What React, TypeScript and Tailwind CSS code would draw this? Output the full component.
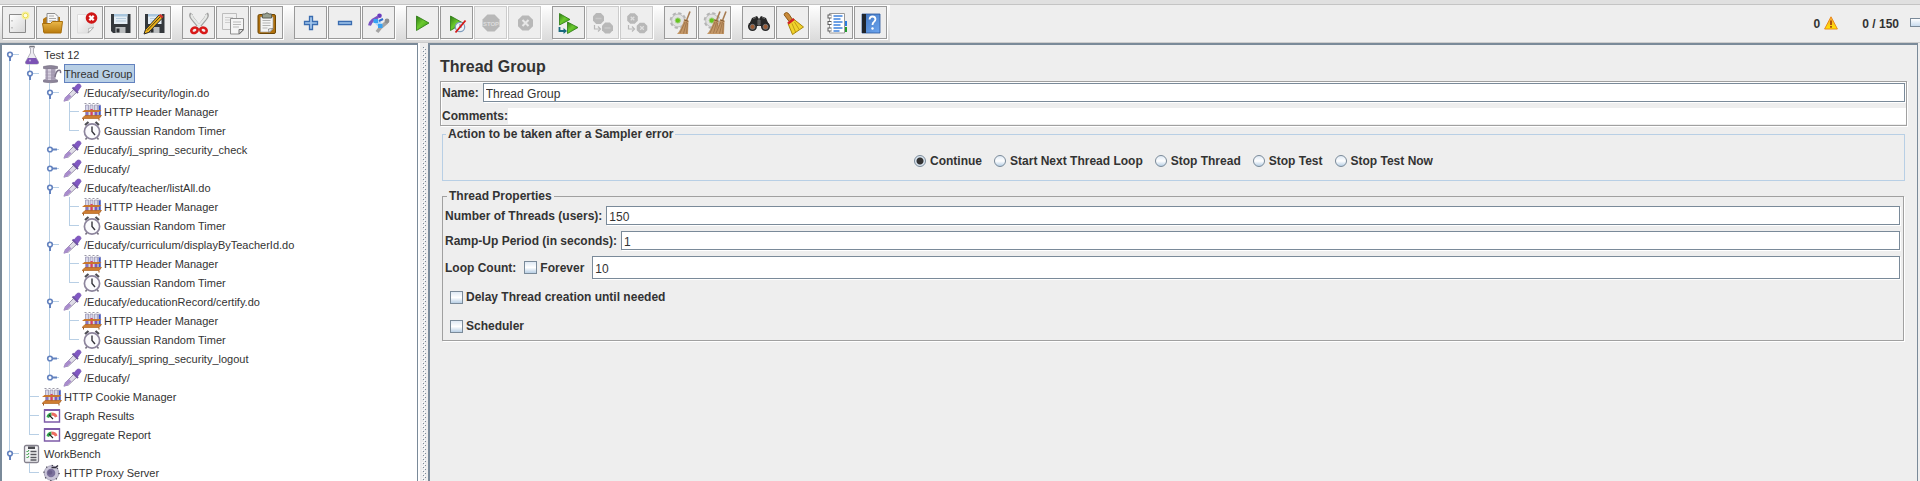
import React from "react";

type IconProps = { children: React.ReactNode; size?: string };

function Glyph({ children, size = "h-6 w-6" }: IconProps) {
  return (
    <svg viewBox="0 0 24 24" className={`${size} shrink-0`} aria-hidden="true">
      {children}
    </svg>
  );
}

const Defs = () => (
  <svg width="0" height="0" className="absolute" aria-hidden="true">
    <defs>
      <linearGradient id="green" x1="0" y1="0" x2="1" y2="1">
        <stop offset="0" stopColor="#2b7a12" />
        <stop offset="0.45" stopColor="#6cc92f" />
        <stop offset="1" stopColor="#2f9410" />
      </linearGradient>
      <linearGradient id="folder" x1="0" y1="0" x2="0" y2="1">
        <stop offset="0" stopColor="#eab84a" />
        <stop offset="1" stopColor="#b97a0c" />
      </linearGradient>
      <linearGradient id="paper" x1="0" y1="0" x2="1" y2="1">
        <stop offset="0" stopColor="#ffffff" />
        <stop offset="1" stopColor="#d6d6d6" />
      </linearGradient>
      <linearGradient id="book" x1="0" y1="0" x2="1" y2="1">
        <stop offset="0" stopColor="#3f74bf" />
        <stop offset="1" stopColor="#6da6f0" />
      </linearGradient>
      <linearGradient id="warn" x1="0" y1="0" x2="0" y2="1">
        <stop offset="0" stopColor="#f9a13a" />
        <stop offset="1" stopColor="#ffe600" />
      </linearGradient>
      <pattern id="grip" width="4" height="4" patternUnits="userSpaceOnUse">
        <path d="M1 0h1v1H1zM3 2h1v1H3z" fill="#7a8a99" />
        <path d="M2 1h1v1H2zM0 3h1v1H0z" fill="#ffffff" />
      </pattern>
    </defs>
  </svg>
);

const Floppy = () => (
  <>
    <path d="M2 3h19.500v19H4l-2-2z" fill="#34383c" />
    <path d="M5 3h13.500v10H5z" fill="#e4edf4" />
    <path d="M5 3h13.500v2.500H5z" fill="#a9c6dd" />
    <path d="M7 7.500h10M7 10h10" stroke="#b5cbdc" strokeWidth="1" />
    <path d="M6.500 16h10v6h-10z" fill="#b9bcbe" />
    <path d="M7.500 17.500h3v4h-3z" fill="#2b2e31" />
  </>
);

const Stop = ({ cx, cy, r }: { cx: number; cy: number; r: number }) => (
  <path
    d={`M${cx - r * 0.42} ${cy - r}H${cx + r * 0.42}L${cx + r} ${cy - r * 0.42}V${cy + r * 0.42}L${cx + r * 0.42} ${cy + r}H${cx - r * 0.42}L${cx - r} ${cy + r * 0.42}V${cy - r * 0.42}z`}
    fill="#b8b8b8"
  />
);

const Broom = ({ dx = 0 }: { dx?: number }) => (
  <g transform={`translate(${dx} 0)`}>
    <path d="M21 0.500l-3.500 9" stroke="#a67c52" strokeWidth="1.600" />
    <path d="M15.500 8l4 1.500-.5 13.500h-11q4-4 7.500-15z" fill="#c39767" />
    <path d="M16 11l-5 11M17.500 11l-3 11.500M18.500 12l-1 10.500" stroke="#8b6239" strokeWidth="0.600" />
    <path d="M15.300 9l4 1.300" stroke="#7d5630" strokeWidth="1" />
  </g>
);

const Gear = () => (
  <>
    <circle cx="9" cy="9.500" r="7.200" fill="#dedede" stroke="#b4b4b4" strokeWidth="2.200" strokeDasharray="3.300 2.350" />
    <circle cx="9" cy="9.500" r="6.300" fill="#e2e2e2" stroke="#c2c2c2" />
    <circle cx="8.800" cy="9.500" r="2.600" fill="#66c41f" stroke="#a4cf86" />
  </>
);

const toolIcons: Record<string, React.ReactNode> = {
  New: (
    <>
      <path d="M2.500 3.500h16v18h-16z" fill="url(#paper)" stroke="#8a8a8a" />
      <path d="M5 9v1.500M5 16v1.500" stroke="#999" strokeWidth="1" />
      <circle cx="18.500" cy="4.500" r="4" fill="#f6ef9c" />
      <circle cx="18.500" cy="4.500" r="2.300" fill="#fffde0" stroke="#e9dd52" />
    </>
  ),
  Open: (
    <>
      <path d="M2 8l3-2h14v15H2z" fill="#b8780f" />
      <path d="M6 2.500h8l3 3V15H6z" fill="#f7f7f7" stroke="#8c8c8c" />
      <path d="M8 5h5M8 7.500h7M8 10h7" stroke="#a8a8a8" />
      <path d="M1.500 12.500h8l2-2h10l-1.500 11.500h-17z" fill="url(#folder)" stroke="#a86f0c" />
    </>
  ),
  Close: (
    <>
      <path d="M2.500 3.500h16V17l-4.500 5H2.500z" fill="url(#paper)" stroke="#dcdcdc" />
      <path d="M18.500 16.500l-5.500 5.500q1.500-3 .5-4.500z" fill="#fff" stroke="#aaa" strokeWidth="0.800" />
      <circle cx="16.500" cy="7" r="5.800" fill="#cf1616" />
      <path d="M14.300 4.800l4.400 4.400M18.700 4.800l-4.400 4.400" stroke="#fff" strokeWidth="2.200" />
    </>
  ),
  Save: <Floppy />,
  "Save as": (
    <>
      <Floppy />
      <path d="M16 4l3.500 3L5.500 21.500 1 23l1.500-4.500z" fill="#f0b51c" stroke="#2a2a2a" strokeWidth="1" />
      <path d="M15.500 4.500l2-1.500 3 2.500-1.500 2z" fill="#d0352b" />
      <path d="M4 19.500L17 6" stroke="#4a3a10" strokeWidth="1" />
    </>
  ),
  Cut: (
    <>
      <path d="M4.500 2.500q-1.500 2 1 5l8 10M19.500 2.500q1.500 2-1 5l-8 10" stroke="#a0a0a0" strokeWidth="3.600" fill="none" />
      <path d="M5 3.500q-1 1.500 1 4l7.500 9M19 3.500q1 1.500-1 4l-7.500 9" stroke="#e6e8e6" strokeWidth="2.200" fill="none" />
      <ellipse cx="7.500" cy="19.300" rx="3.300" ry="2.600" fill="none" stroke="#d81818" strokeWidth="2.600" transform="rotate(-25 7.500 19.300)" />
      <ellipse cx="16.500" cy="19.300" rx="3.300" ry="2.600" fill="none" stroke="#d81818" strokeWidth="2.600" transform="rotate(25 16.500 19.300)" />
    </>
  ),
  Copy: (
    <>
      <path d="M1.500 2.500h14v16h-14z" fill="#f0f0f0" stroke="#bdbdbd" />
      <path d="M4 6.500h8M4 9h8M4 11.500h6" stroke="#cdcdcd" />
      <path d="M9.500 7.500h13V19l-4 4h-9z" fill="#f5f5f5" stroke="#8f8f8f" />
      <path d="M12 11h8M12 13.500h8M12 16h6" stroke="#b9b9b9" />
      <path d="M22.500 18.500l-4.500 4.500v-4.500z" fill="#ddd" stroke="#777" />
    </>
  ),
  Paste: (
    <>
      <rect x="3" y="3.500" width="17.500" height="19" rx="1.500" fill="#b0710e" stroke="#6e4705" />
      <path d="M5.500 6h12.500v12l-3 3H5.500z" fill="#f4f4f4" stroke="#9f9f9f" strokeWidth="0.700" />
      <path d="M7.500 9.500h8M7.500 12h8M7.500 14.500h8M7.500 17h5" stroke="#b3b3b3" />
      <path d="M18 17.500l-4 4-.5-3.500z" fill="#fff" stroke="#777" strokeWidth="0.800" />
      <path d="M7.500 3h2.500q2-2.500 4 0h2.500v4h-9z" fill="#98a090" stroke="#5c6156" />
    </>
  ),
  "Expand all": <path d="M10.500 5.500h3v5h5v3h-5v5h-3v-5h-5v-3h5z" fill="#a5c8ee" stroke="#3a6cb0" strokeWidth="1.300" />,
  "Collapse all": <path d="M5.500 10.500h13v3h-13z" fill="#a5c8ee" stroke="#3a6cb0" strokeWidth="1.300" />,
  Toggle: (
    <>
      <path d="M2.500 14.500q.5-3 3.500-5.500l5-3" fill="none" stroke="#7b55c4" strokeWidth="3" />
      <circle cx="12.500" cy="4.800" r="2.300" fill="#6a3bbd" />
      <path d="M10 21l4-5 6-5" fill="none" stroke="#a4a4a4" strokeWidth="3.600" />
      <circle cx="20" cy="10" r="2.400" fill="#8f8f8f" />
      <path d="M9 10l5 5" stroke="#a9d6fa" strokeWidth="5" />
      <path d="M6.500 8h4.500v4H6.500zM11 13h4.500v4H11z" fill="#38a3f4" />
      <path d="M12 10l4-2" stroke="#2f6fd0" strokeWidth="2" />
    </>
  ),
  Start: <path d="M5.500 5L18 12 5.500 19.500z" fill="url(#green)" stroke="#28780f" strokeWidth="0.800" />,
  "Start no pauses": (
    <>
      <path d="M5.500 5L18 12 5.500 19.500z" fill="url(#green)" stroke="#28780f" strokeWidth="0.800" />
      <circle cx="15" cy="16" r="4.700" fill="#eef3f8" stroke="#7f9dbd" strokeWidth="1.200" />
      <path d="M15 16v-3M15 16h2" stroke="#6a8ab0" />
      <path d="M20.500 9.500l-10 12" stroke="#d51717" strokeWidth="1.800" />
    </>
  ),
  Stop: (
    <>
      <Stop cx={12} cy={12} r={8.500} />
      <text x="12" y="14.500" textAnchor="middle" fontSize="6" fontWeight="700" fill="#dcdcdc" fontFamily="Liberation Sans">STOP</text>
    </>
  ),
  Shutdown: (
    <>
      <Stop cx={12.500} cy={12} r={7.500} />
      <path d="M9.500 9l6 6M15.500 9l-6 6" stroke="#e8e8e8" strokeWidth="2" />
    </>
  ),
  "Remote start all": (
    <>
      <path d="M2.500 2.500L13 8.500 2.500 14z" fill="url(#green)" stroke="#28780f" strokeWidth="0.800" />
      <path d="M10.500 11L21 16.500l-10.500 6z" fill="url(#green)" stroke="#28780f" strokeWidth="0.800" />
      <path d="M2.500 16v4h4.500" fill="none" stroke="#17697d" strokeWidth="1.800" />
      <path d="M6.500 17l3.500 3-3.500 3z" fill="#17697d" />
    </>
  ),
  "Remote stop all": (
    <>
      <Stop cx={7.500} cy={7.500} r={5.500} />
      <Stop cx={16.500} cy={17} r={5.500} />
      <path d="M4.500 7.500h6M13.500 17h6" stroke="#c8c8c8" strokeWidth="1.500" />
      <path d="M3.500 14v4h5M7 15.500l2.500 2.500L7 20.500" fill="none" stroke="#b8b8b8" strokeWidth="1.200" />
    </>
  ),
  "Remote shutdown all": (
    <>
      <Stop cx={7.500} cy={7.500} r={5.300} />
      <Stop cx={17} cy={17} r={5.300} />
      <path d="M5.700 5.700l3.600 3.600M9.300 5.700l-3.600 3.600M15.200 15.200l3.600 3.600M18.800 15.200l-3.600 3.600" stroke="#dedede" strokeWidth="1.300" />
      <path d="M3.500 14v4h5M7 15.500l2.500 2.500L7 20.500" fill="none" stroke="#b8b8b8" strokeWidth="1.200" />
    </>
  ),
  Clear: (
    <>
      <Gear />
      <Broom />
    </>
  ),
  "Clear all": (
    <>
      <Gear />
      <Broom dx={-4} />
      <Broom dx={2} />
    </>
  ),
  Search: (
    <>
      <path d="M5 7l5-2 2 3 2-3 5 2 3.500 8H1.500z" fill="#262626" />
      <path d="M6 7.500l3-1M15 6.500l3 1M11 9h2v5h-2z" stroke="#6a6a6a" fill="#505050" />
      <circle cx="5.500" cy="15.500" r="4.500" fill="#262626" />
      <circle cx="18.500" cy="15.500" r="4.500" fill="#262626" />
      <circle cx="5.500" cy="15.800" r="2.500" fill="#9c5a33" stroke="#777" />
      <circle cx="18.500" cy="15.800" r="2.500" fill="#9c5a33" stroke="#777" />
    </>
  ),
  "Reset search": (
    <>
      <path d="M3.500 2.500q2-2 4 0l4 6-3 2.500-4.500-6q-1.500-1 -.5-2.500z" fill="#c98a3a" stroke="#8d5a18" />
      <path d="M12.500 8l10 8-11 7.500-4.500-11z" fill="#f0d22c" stroke="#a8850b" />
      <path d="M11 12.500l3.500 8.500M13.500 11l5 8" stroke="#bf9d14" />
      <path d="M7 12.500l6-4.500" stroke="#d32424" strokeWidth="2.500" />
    </>
  ),
  "Function helper": (
    <>
      <path d="M4.500 2.500h15v19.500h-15z" fill="#fff" stroke="#9a9a9a" />
      <path d="M20 10h2v5h-2z" fill="#2b7de0" />
      <path d="M20 16h2v5h-2z" fill="#229c2c" />
      <path d="M8.500 5h9M8.500 8h7M8.500 11h9M8.500 14h7M8.500 17h9M8.500 20h6" stroke="#3f83dd" strokeWidth="1.300" />
      <path d="M2.500 5.500h4M2.500 12h4M2.500 18.500h4" stroke="#5a5a5a" strokeWidth="4" />
      <path d="M3.500 5.500h3M3.500 12h3M3.500 18.500h3" stroke="#fff" strokeWidth="2.200" />
    </>
  ),
  Help: (
    <>
      <path d="M3 3h18v19H3z" fill="url(#book)" stroke="#29559c" strokeWidth="0.800" />
      <path d="M3 3h4v19H3z" fill="#20252c" />
      <path d="M10.500 8.500q.3-3 3-3t3 2.600q0 1.600-1.600 2.800-1.400 1-1.400 3" fill="none" stroke="#fff" strokeWidth="1.800" />
      <circle cx="13.500" cy="17.500" r="1.200" fill="#fff" />
    </>
  ),
};

const toolGroups: string[][] = [
  ["New", "Open", "Close", "Save", "Save as"],
  ["Cut", "Copy", "Paste"],
  ["Expand all", "Collapse all", "Toggle"],
  ["Start", "Start no pauses", "Stop", "Shutdown"],
  ["Remote start all", "Remote stop all", "Remote shutdown all"],
  ["Clear", "Clear all"],
  ["Search", "Reset search"],
  ["Function helper", "Help"],
];
const disabledTools = ["Stop", "Shutdown", "Remote stop all", "Remote shutdown all"];

function Toolbar() {
  return (
    <header>
      <div className="h-1 bg-[#e0e0e0]" />
      <div className="flex h-[38px] items-stretch border-t border-[#c4c4c4] bg-[#eeeeee]">
        <div
          role="toolbar"
          aria-label="Main"
          className="flex gap-[11px] border-b border-[#dadada] bg-linear-to-b from-white to-[#dadada] pt-px pr-[3px] pl-0.5"
        >
          {toolGroups.map((group) => (
            <div key={group[0]} className="flex gap-px">
              {group.map((name) => {
                const off = disabledTools.includes(name);
                return (
                  <button
                    key={name}
                    type="button"
                    aria-label={name}
                    disabled={off}
                    className={`flex h-[33px] w-[33px] items-center justify-center border bg-[#eeeeee] shadow-[1px_1px_0_#fff] ${
                      off ? "border-[#cccccc]" : "border-[#999999]"
                    }`}
                  >
                    <Glyph>{toolIcons[name]}</Glyph>
                  </button>
                );
              })}
            </div>
          ))}
        </div>
        <div className="ml-auto flex items-center pt-px text-xs font-bold">
          <span>0</span>
          <svg viewBox="0 0 14 14" className="mr-6 mb-0.5 ml-1 h-3.5 w-3.5" aria-label="Warnings">
            <path d="M7 .8L13.400 13H.6z" fill="url(#warn)" stroke="#e88a1c" strokeLinejoin="round" />
            <path d="M6.100 4.500h1.800v4.500H6.100zM6.100 10h1.800v1.700H6.100z" fill="#a8480c" />
          </svg>
          <span>0 / 150</span>
          <span className="mb-1 ml-[11px] h-[9px] w-2.5 border border-r-0 border-[#7a8a99] bg-linear-to-b from-white to-[#c8dbee]" />
        </div>
      </div>
      <div className="h-px bg-[#cccccc]" />
    </header>
  );
}

type NodeKind = "plan" | "group" | "sampler" | "config" | "timer" | "listener" | "bench" | "proxy";

const nodeIcons: Record<NodeKind, React.ReactNode> = {
  plan: (
    <>
      <path d="M7.500 1.500h5v1.500h-1v5l5 9q.5 2-1.500 2H5q-2 0-1.500-2l5-9V3h-1z" fill="#ecebf1" stroke="#b3b3bb" />
      <path d="M6 13h8l2.500 4q.5 2-1.500 2H5q-2 0-1.500-2z" fill="#7c53b5" />
      <path d="M7.500 1.500h5" stroke="#77777f" strokeWidth="1.500" />
      <circle cx="8" cy="15.500" r="1" fill="#c3aee4" />
    </>
  ),
  group: (
    <>
      <path d="M1.500 2.500q7-2 14 0v2q-7 1.500-14 0zM1.500 16q7-2 14 0v2q-7 1.500-14 0z" fill="#8d8499" stroke="#7a7286" strokeWidth="0.700" />
      <path d="M3.500 5h10v11h-10z" fill="#a99fb6" />
      <path d="M6 5h3v11H6z" fill="#d4cddd" />
      <path d="M3.500 8h10M3.500 11h10M3.500 14h10" stroke="#9a90a8" strokeWidth="0.600" />
      <path d="M13 13q1-6.500 4-6.800 2-.2 1.500 3" fill="none" stroke="#7b7288" strokeWidth="1.500" />
    </>
  ),
  sampler: (
    <>
      <path d="M2 18l1.500-3.500 9-9 3 3-9 8.500z" fill="#e0dde8" stroke="#9a94aa" strokeWidth="1" />
      <path d="M1.500 18.800l1.800-4.500 3.700-3.300 2.500 2.500-4 3.700z" fill="#a98ccd" />
      <path d="M10.500 4.500l5.500 5.500" stroke="#6f55a0" strokeWidth="2" />
      <path d="M12 5l3-3.500q3.500-1.500 4 2l-3.500 5z" fill="#8157c4" stroke="#7450b0" strokeWidth="0.800" />
    </>
  ),
  config: (
    <>
      <path d="M3.500 3h3v12h-3zM8 3h3v12H8zM12.500 3h3v12h-3zM16.500 3h2v12h-2z" fill="#d8d6ea" stroke="#8f8cab" strokeWidth="0.700" />
      <path d="M4 8h2v6H4z" fill="#8a6fc0" />
      <path d="M8.500 7h2.200v7H8.500z" fill="#da3e66" />
      <path d="M13 8h2v6h-2z" fill="#8059c0" />
      <path d="M17 3.500h1.500V13H17z" fill="#3b57d6" />
      <path d="M2.500 1.500h16" stroke="#9a98a6" strokeDasharray="2 2" />
      <path d="M0 10l2.500-2h17l-2.500 2z" fill="#c9762b" />
      <path d="M0 16.500l3-3h16.500l-2.500 3z" fill="#cf7d30" stroke="#b0661f" strokeWidth="0.700" />
      <path d="M1.500 16.500v2M17 16.500v2" stroke="#9c5516" />
    </>
  ),
  timer: (
    <>
      <path d="M3 4L6.500 1M17 4L13.500 1" stroke="#4f4f56" strokeWidth="2.200" />
      <path d="M5 16.500l-1.500 2M15 16.500l1.500 2" stroke="#77737f" strokeWidth="1.500" />
      <circle cx="10" cy="10.500" r="7.600" fill="#fbfbfd" stroke="#8d859d" strokeWidth="1.700" />
      <path d="M10 5.500v5l3 3.500" fill="none" stroke="#35353b" strokeWidth="1.400" />
    </>
  ),
  listener: (
    <>
      <path d="M2.500 4h15v12h-15z" fill="#fff" stroke="#7d5ba8" strokeWidth="1.400" />
      <path d="M2 4h16" stroke="#7d5ba8" strokeWidth="2" />
      <path d="M4.500 11q.5-4 5-4.500v3.500q-2 0-2.500 2z" fill="#31a34b" />
      <path d="M9.500 6.500q5 0 6 4l-2.500 1q-.5-2-3.500-2z" fill="#ec6d62" />
      <path d="M7 9l4 4" stroke="#222" strokeWidth="1.100" />
    </>
  ),
  bench: (
    <>
      <rect x="2.500" y="1.500" width="14" height="17" rx="1.500" fill="#f3f3f5" stroke="#84818d" strokeWidth="1.300" />
      <path d="M6 2.500h7v2.500H6z" fill="#4a4a50" />
      <path d="M8.500 7.500h6M8.500 10.500h6M8.500 13.500h6M8.500 16h6" stroke="#57575e" strokeWidth="1.500" />
      <path d="M4.500 7l1 1 1.500-2M4.500 10l1 1 1.500-2M4.500 13l1 1 1.500-2" fill="none" stroke="#39a045" />
    </>
  ),
  proxy: (
    <>
      <circle cx="9.500" cy="10" r="7.300" fill="#c9c5d8" stroke="#aaa6bc" />
      <circle cx="9.500" cy="10" r="7.600" fill="none" stroke="#3d3a4a" strokeWidth="1.200" strokeDasharray="1.200 4.770" />
      <circle cx="9" cy="10" r="4.300" fill="#7b719c" />
      <circle cx="8" cy="9.500" r="2.200" fill="#6a5f8c" />
      <path d="M9.500 4.500h4l2.500-2" fill="none" stroke="#2f2c3a" strokeWidth="1.500" />
    </>
  ),
};

type TreeNode = { label: string; kind: NodeKind; closed?: boolean; selected?: boolean; children?: TreeNode[] };

const headerAndTimer: TreeNode[] = [
  { label: "HTTP Header Manager", kind: "config" },
  { label: "Gaussian Random Timer", kind: "timer" },
];

const tree: TreeNode[] = [
  {
    label: "Test 12",
    kind: "plan",
    children: [
      {
        label: "Thread Group",
        kind: "group",
        selected: true,
        children: [
          { label: "/Educafy/security/login.do", kind: "sampler", children: headerAndTimer },
          { label: "/Educafy/j_spring_security_check", kind: "sampler", closed: true },
          { label: "/Educafy/", kind: "sampler", closed: true },
          { label: "/Educafy/teacher/listAll.do", kind: "sampler", children: headerAndTimer },
          { label: "/Educafy/curriculum/displayByTeacherId.do", kind: "sampler", children: headerAndTimer },
          { label: "/Educafy/educationRecord/certify.do", kind: "sampler", children: headerAndTimer },
          { label: "/Educafy/j_spring_security_logout", kind: "sampler", closed: true },
          { label: "/Educafy/", kind: "sampler", closed: true },
        ],
      },
      { label: "HTTP Cookie Manager", kind: "config" },
      { label: "Graph Results", kind: "listener" },
      { label: "Aggregate Report", kind: "listener" },
    ],
  },
  { label: "WorkBench", kind: "bench", children: [{ label: "HTTP Proxy Server", kind: "proxy" }] },
];

function Guide({ line }: { line: boolean }) {
  return (
    <svg viewBox="0 0 20 19" className="h-[19px] w-5 shrink-0" aria-hidden="true">
      {line && <path d="M7.500 0v19" stroke="#b8cfe5" />}
    </svg>
  );
}

function Joint({ node, last, root }: { node: TreeNode; last: boolean; root: boolean }) {
  const bottom = last ? 10 : 19;
  const top = root && !last ? 9 : 0;
  return (
    <svg viewBox="0 0 20 19" className="h-[19px] w-5 shrink-0" aria-hidden="true">
      <path d={`M7.500 ${top}V${bottom}M7 9.500H17`} stroke="#b8cfe5" fill="none" />
      {node.children && <path d="M8 10v6" stroke="#6382bf" strokeWidth="2" />}
      {node.closed && <path d="M10 9.500h5" stroke="#6382bf" strokeWidth="2" />}
      {(node.children || node.closed) && <circle cx="8" cy="9.500" r="2.300" fill="#fff" stroke="#6382bf" strokeWidth="1.600" />}
    </svg>
  );
}

function Branch({ nodes, trail }: { nodes: TreeNode[]; trail: boolean[] }) {
  return (
    <ul role={trail.length ? "group" : "tree"}>
      {nodes.map((node, i) => {
        const last = i === nodes.length - 1;
        return (
          <li key={i} role="treeitem" aria-selected={!!node.selected}>
            <div className="flex h-[19px] items-center">
              {trail.map((line, k) => (
                <Guide key={k} line={line} />
              ))}
              <Joint node={node} last={last} root={trail.length === 0} />
              <svg viewBox="0 0 20 20" className="mr-0.5 h-5 w-5 shrink-0" aria-hidden="true">
                {nodeIcons[node.kind]}
              </svg>
              <span
                className={`flex h-[19px] items-center border-y border-r pt-0.5 pr-0.5 whitespace-nowrap ${
                  node.selected ? "border-[#6382bf] bg-[#b8cfe5] shadow-[inset_1px_0_0_#6382bf]" : "border-transparent"
                }`}
              >
                {node.label}
              </span>
            </div>
            {node.children && <Branch nodes={node.children} trail={[...trail, !last]} />}
          </li>
        );
      })}
    </ul>
  );
}

const fieldClass =
  "min-w-0 flex-1 border border-[#7a8a99] bg-white px-0.5 pt-0.5 text-xs font-normal text-[#333333] shadow-[1px_1px_0_#fff] outline-none";
const boxClass =
  "h-[13px] w-[13px] shrink-0 appearance-none border border-[#7a8a99] bg-linear-to-b from-[#dfe9f4] via-white to-[#b8cfe5]";

function Check({ label }: { label: string }) {
  return (
    <label className="flex items-center gap-[3px]">
      <input type="checkbox" className={boxClass} />
      {label}
    </label>
  );
}

function Editor() {
  return (
    <main className="min-w-0 flex-1 border-2 border-r border-b-0 border-[#7a8a99] bg-[#eeeeee] px-2.5 text-xs font-bold">
      <h1 className="pt-3 pb-1 text-base leading-5">Thread Group</h1>
      <section className="border border-[#a0a0a0] pb-px shadow-[1px_1px_0_#fff,inset_1px_1px_0_#fff]">
        <div className="flex items-center gap-1 pt-px pr-px pl-px">
          <label htmlFor="name" className="pt-px">Name:</label>
          <input id="name" defaultValue="Thread Group" className={`${fieldClass} h-[19px]`} />
        </div>
        <div className="mt-[6px] flex h-4 items-center pl-px">
          <label htmlFor="comments">Comments:</label>
          <input id="comments" className="h-4 min-w-0 flex-1 bg-white px-0.5 font-normal outline-none" />
        </div>
      </section>

      <fieldset className="mx-0.5 mt-px h-[54px] border border-[#b8cfe5]">
        <legend className="ml-[3px] px-0.5 leading-[14px]">Action to be taken after a Sampler error</legend>
        <div className="flex h-full items-center justify-center gap-3">
          {["Continue", "Start Next Thread Loop", "Stop Thread", "Stop Test", "Stop Test Now"].map((t) => (
            <label key={t} className="flex items-center gap-1">
              <input
                type="radio"
                name="action"
                defaultChecked={t === "Continue"}
                className="h-3 w-3 shrink-0 appearance-none rounded-full border border-[#7a8a99] bg-linear-to-b from-[#dfe9f4] via-white to-[#b8cfe5] checked:bg-[radial-gradient(circle,#333_3px,#dbe6f1_4px)]"
              />
              {t}
            </label>
          ))}
        </div>
      </fieldset>

      <fieldset className="mr-[3px] ml-0.5 mt-2 border border-[#a0a0a0] pr-[3px] pl-0.5 pb-[6px] shadow-[1px_1px_0_#fff]">
        <legend className="ml-0.5 px-0.5 leading-[14px]">Thread Properties</legend>
        <div className="flex flex-col gap-[6px] pt-[3px]">
          <div className="flex items-center gap-1">
            <label htmlFor="threads" className="pt-px">Number of Threads (users):</label>
            <input id="threads" defaultValue="150" className={`${fieldClass} h-[19px]`} />
          </div>
          <div className="flex items-center gap-1">
            <label htmlFor="ramp" className="pt-px">Ramp-Up Period (in seconds):</label>
            <input id="ramp" defaultValue="1" className={`${fieldClass} h-[19px]`} />
          </div>
          <div className="flex items-center gap-2">
            <label htmlFor="loops">Loop Count:</label>
            <Check label="Forever" />
            <input id="loops" defaultValue="10" className={`${fieldClass} h-[23px]`} />
          </div>
        </div>
        <div className="mt-2.5 flex flex-col items-start gap-[13px] pl-[5px]">
          <Check label="Delay Thread creation until needed" />
          <Check label="Scheduler" />
        </div>
      </fieldset>
    </main>
  );
}

export default function App() {
  return (
    <div className="flex h-screen flex-col overflow-hidden bg-[#eeeeee] font-['Liberation_Sans',Arial,sans-serif] text-[#333333]">
      <Defs />
      <Toolbar />
      <div className="flex min-h-0 flex-1 pr-0.5">
        <nav
          aria-label="Test plan"
          className="w-[418px] shrink-0 overflow-hidden border-2 border-r border-b-0 border-[#7a8a99] bg-white text-[11px]"
        >
          <Branch nodes={tree} trail={[]} />
        </nav>
        <div role="separator" className="flex w-2.5 shrink-0 justify-end border-l-2 border-white bg-[#eeeeee] pt-1 pr-0.5">
          <svg className="h-full w-1" aria-hidden="true">
            <rect width="4" height="100%" fill="url(#grip)" />
          </svg>
        </div>
        <Editor />
      </div>
    </div>
  );
}
